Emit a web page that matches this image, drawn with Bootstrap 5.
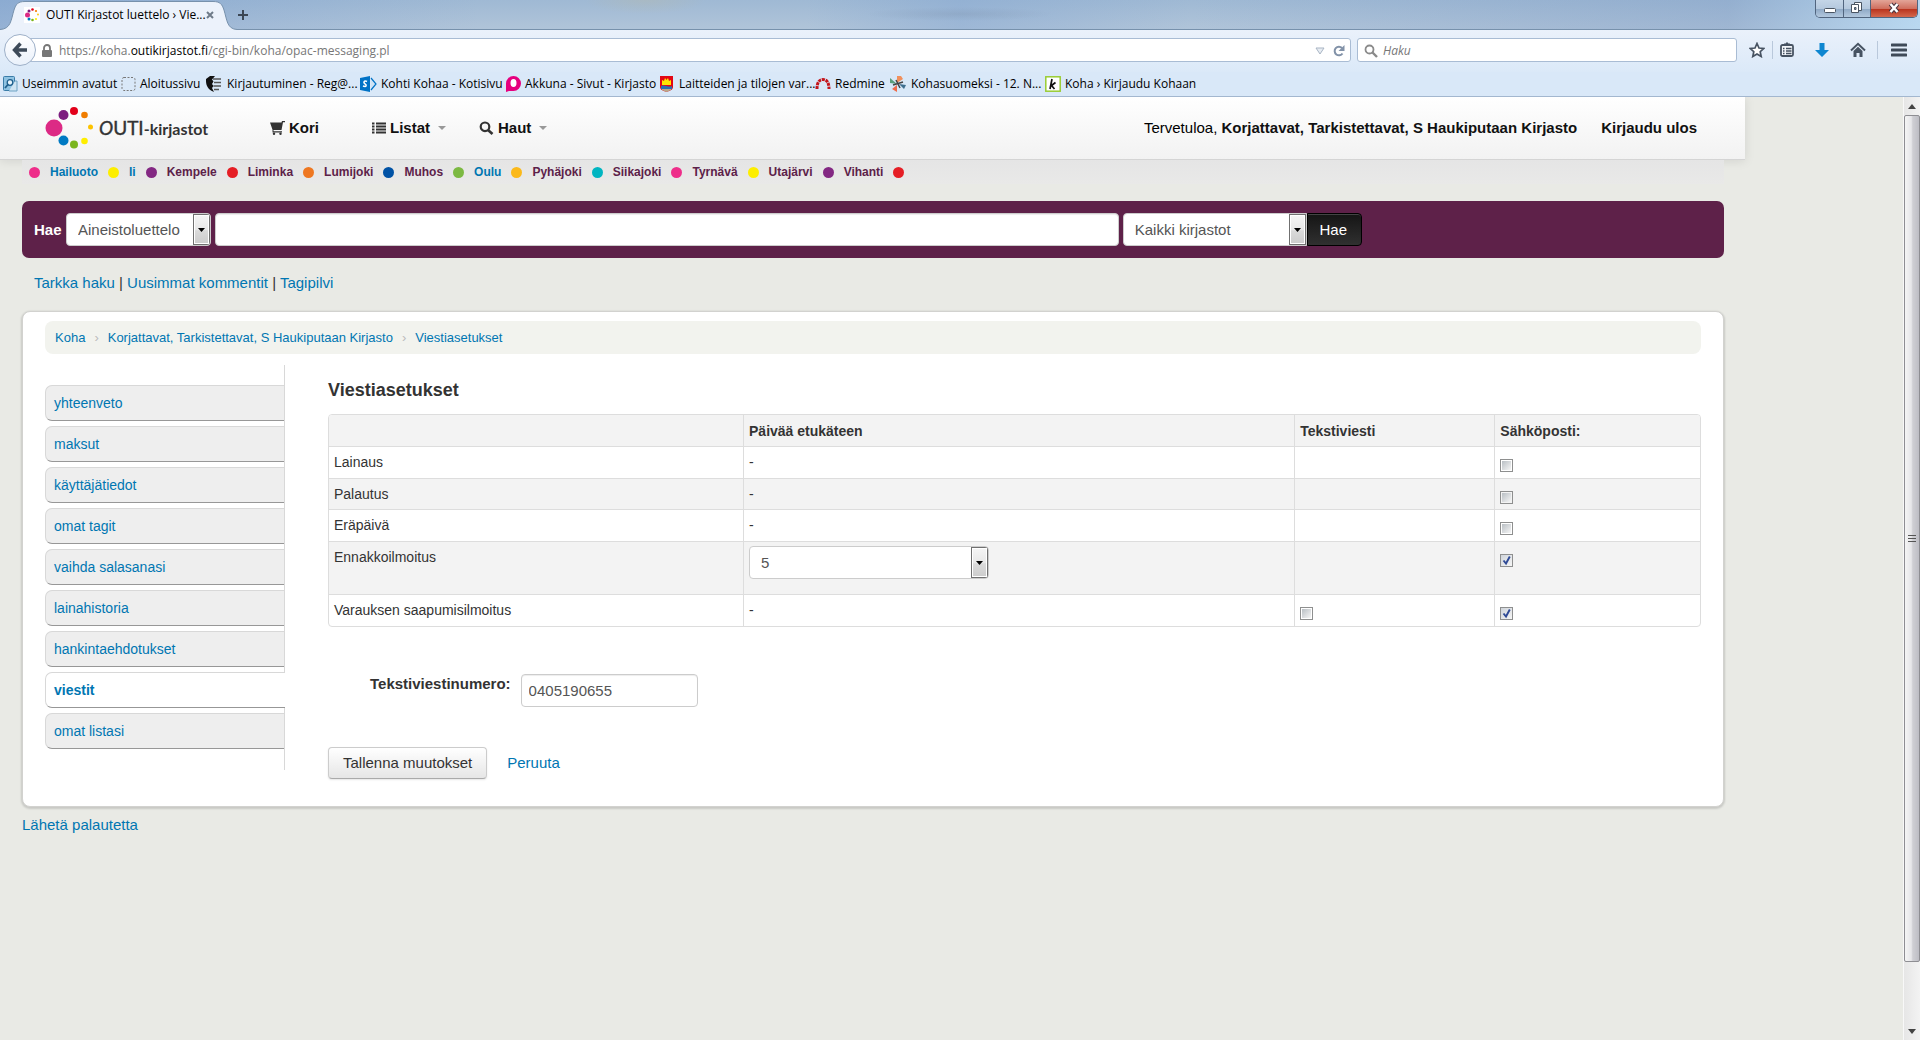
<!DOCTYPE html>
<html lang="fi">
<head>
<meta charset="utf-8">
<meta name="viewport" content="width=device-width, initial-scale=1">
<title>OUTI Kirjastot luettelo › Viestiasetukset</title>
<link href="https://cdn.jsdelivr.net/npm/bootstrap@5.3.0/dist/css/bootstrap.min.css" rel="stylesheet">
<script src="https://cdn.jsdelivr.net/npm/bootstrap@5.3.0/dist/js/bootstrap.bundle.min.js" defer></script>
<style>
body{font-family:"Liberation Sans",Arial,sans-serif;font-size:15px;line-height:20px;color:#333;background:#e9eae5}
a{color:#0076b2;text-decoration:none}
svg{display:block;flex:none}
/* browser window */
.chrome{font-family:"Open Sans","Noto Sans",sans-serif;font-size:12px;line-height:16px;color:#000}
.tabstrip{height:30px;background:radial-gradient(ellipse 95px 7px at 960px 14px,rgba(120,140,165,.25),transparent),radial-gradient(ellipse 60px 14px at 645px 0,rgba(180,185,175,.45),transparent),linear-gradient(90deg,rgba(110,150,205,.4),transparent 25%,transparent 42%,rgba(130,165,210,.4) 50%,transparent 62%,rgba(120,150,195,.3) 90%,rgba(190,225,250,.7)),linear-gradient(#9fb9d4,#b0c4d9);border-bottom:1px solid #7791ac}
.page-tab{width:237px;height:30px;padding-left:24px;margin-bottom:-1px}
.tab-shape{position:absolute;left:0;top:0;z-index:-1}
.tab-title{width:152px;margin-left:6px;white-space:nowrap}
.winctl{height:18px;width:103px;border:1px solid #51657f;border-top:0;border-radius:0 0 5px 5px;overflow:hidden;margin-right:2px}
.winctl button{border:0;padding:0;width:27px;background:linear-gradient(#c4d5e7,#b5c9de 50%,#8ea8c5 52%,#b3c8de)}
.winctl button+button{border-left:1px solid #51657f}
.winctl .w-close{background:linear-gradient(#e3a598,#d0705f 50%,#b8321c 52%,#d4684d)}
.toolbar{height:42px;padding:8px 13px 0 4px;background:linear-gradient(#eaf1fb,#dbe9f8)}
.backbtn{width:32px;height:32px;border:1px solid #9eb0c8;border-radius:50%;background:linear-gradient(#fff,#eaf1fb);z-index:1;padding:0;margin-top:-4px}
.urlbox,.findbox{height:24px;background:#fff;border:1px solid #a9bcd4;border-radius:3px}
.urlbox{margin-left:-8px;padding:1px 5px 0 12px}
.findbox{width:380px;margin-left:6px;padding:1px 6px 0}
.findbox input{border:0;outline:0;background:none;padding:0;color:#777;height:20px;margin-left:5px}
.url-text{color:#777;margin-left:6px}
.findbox input::placeholder{color:#777;font-style:italic;opacity:1}
.toolicons{margin-left:12px;height:24px}
.tool-sep{width:1px;height:18px;background:#b9c8db;margin:0 7px}
.tool-sep.wide{margin:0 13px 0 11px}
.toolicons .far{margin-left:21px}
.toolicons button,.urlbox button,.page-tab button,.plus{border:0;background:none;padding:0}
.bookmarks{height:25px;background:#d9e8f8;border-bottom:1px solid #a3b7cf;padding:1px 0 0 3px;display:grid;grid-template-columns:118px 84px 155px 146px 153px 156px 74px 156px auto;justify-content:start}
.bookmarks a{color:#000;display:flex;align-items:center;gap:4px;white-space:nowrap;line-height:22px;height:22px}
/* scrollbar */
.scroller{width:17px;background:linear-gradient(90deg,#e6e6e6,#f3f3f3);border-left:1px solid #f8f8f8}
.scroll-end{height:18px}
.thumb{flex:847 1 0;border:1px solid #8e8e93;border-radius:2px;background:linear-gradient(90deg,#f5f5f5,#e6e6e9 45%,#cfcfd4 55%,#bdbdc4)}
.track-rest{flex:60 1 0}
/* opac header */
.opac{padding-right:158px}
.topnav{height:63px;padding:0 48px 0 45px;background:linear-gradient(#fff,#f2f2f2);border-bottom:1px solid #d4d4d4;box-shadow:0 1px 10px rgba(0,0,0,.1)}
.topnav a{color:#111;font-weight:bold}
.logo{width:225px}
.logo-name{margin-left:6px;line-height:24px;white-space:nowrap;font-family:Lato,sans-serif;color:#333}
.logo-name .l0{font-style:italic}
.logo-name .l1{font-size:19px;font-weight:400;-webkit-text-stroke:.4px #333}
.logo-name .l2{font-size:16px;font-weight:bold}
.menu-listat{margin-left:53px}
.menu-haut{margin-left:33px}
.caret-down{border:4px solid transparent;border-top-color:#999;border-bottom:0;margin-left:8px}
.inner{margin-left:22px;margin-right:21px}
.cities{height:24px;background:linear-gradient(#e5e5e5,#e9e9e8);gap:10px;padding-left:7px;font-size:12px;line-height:16px;font-weight:bold;position:relative}
.cities a{color:#5c2149}
.cities a.hot{color:#0076b2}
.city-dot{width:11px;height:11px;border-radius:50%;flex:none}
.d-pink{background:#ee2d8a}.d-yellow{background:#fdee00}.d-purple{background:#832883}.d-red{background:#e51e25}.d-orange{background:#ee7721}.d-blue{background:#0052a5}.d-green{background:#7cb942}.d-amber{background:#fbb91a}.d-teal{background:#00b5c1}
/* search */
.searchbar{background:#5e2149;border-radius:7px;padding:12px;margin-top:17px;height:57px}
.searchbar label{color:#fff;font-weight:bold;width:32px}
.opac .field{height:33px;border:1px solid #ccc;border-radius:4px;background-color:#fff;color:#555;font-size:15px;line-height:20px;padding:5px 7px;box-shadow:inset 0 1px 1px rgba(0,0,0,.075)}
.opac select.field{appearance:none;padding-left:11px;box-shadow:none;background-repeat:no-repeat;background-position:right 0 center;background-image:url("data:image/svg+xml,%3Csvg xmlns='http://www.w3.org/2000/svg' width='17' height='31'%3E%3Cdefs%3E%3ClinearGradient id='g' x2='0' y2='1'%3E%3Cstop stop-color='%23f4f4f4'/%3E%3Cstop offset='.5' stop-color='%23e8e8e8'/%3E%3Cstop offset='.55' stop-color='%23dadada'/%3E%3Cstop offset='1' stop-color='%23cdcdcd'/%3E%3C/linearGradient%3E%3C/defs%3E%3Crect x='.5' y='.5' width='16' height='30' fill='%23fff' stroke='%23707070'/%3E%3Crect x='2' y='2' width='13' height='27' fill='url(%23g)'/%3E%3Cpath d='M5 14h7l-3.500 4z'/%3E%3C/svg%3E")}
.btn-hae{height:33px;width:55px;border:1px solid #000;border-radius:0 4px 4px 0;background:linear-gradient(#151515,#303030);color:#fff;box-shadow:inset 0 1px 0 rgba(255,255,255,.2);padding:0 2px 0 0;line-height:20px}
.terms{width:65.3%}
.opac select.scope{width:145px}
.opac .term{margin-left:4px;margin-right:4px;min-width:0}
.opac select.branch{width:184px;border-radius:4px 0 0 4px}
.morelinks{padding:15px 12px 0;margin-bottom:18px}
/* panel */
.panel{background:#fff;border:1px solid #d2d2cf;border-radius:8px;box-shadow:0 1px 2px 1px rgba(0,0,0,.14);padding:9px 22px 27px}
.crumbs{background:#f2f3ee;border-radius:8px;height:33px;padding:0 10px;font-size:13px}
.crumbs li+li::before{content:"›";color:#bbb;padding:0 9px}
.sidemenu{width:240px;border-right:1px solid #d8d8d8;margin-top:11px;padding:20px 0 16px}
.sidemenu a{display:block;height:36px;margin-bottom:5px;padding:7px 8px;font-size:14px;border:1px solid #d8d8d8;border-right:0;border-bottom-color:#979797;border-radius:7px 0 0 7px;background:#eee}
.sidemenu a.current{background:#fff;font-weight:bold;margin-right:-1px}
.prefs{margin-left:43px;padding-top:24px}
.prefs h3{font-size:18px;line-height:24px;font-weight:bold;margin-bottom:12px;color:#333}
.msg{border:1px solid #ddd;border-radius:4px;border-collapse:separate;border-spacing:0;font-size:14px;width:100%;table-layout:fixed;overflow:hidden}
.msg th,.msg td{padding:5px;line-height:20px;border-top:1px solid #ddd;vertical-align:top;color:#333}
.msg th{border-top:0;padding-top:6px}
.msg tbody tr:nth-child(odd) td{padding-bottom:6px}
.msg th+th,.msg td+td{border-left:1px solid #ddd}
.msg thead th,.msg tbody tr:nth-child(even) td{background:#f3f3f3}
.msg select.field{margin:-1px 0 10px;display:block;width:240px}
.tick{appearance:none;width:13px;height:13px;border:1px solid #8e8f8f;background:linear-gradient(135deg,#b9bfc4,#f6f6f6) content-box #f4f4f4;padding:1px;display:block;margin:7px 0 0}
.tick:checked{background:url("data:image/svg+xml,%3Csvg xmlns='http://www.w3.org/2000/svg' viewBox='0 0 11 11'%3E%3Cpath d='M2.500 5.500l2.500 3 3.800-7' fill='none' stroke='%232f4a96' stroke-width='1.900'/%3E%3C/svg%3E") center/11px 11px,linear-gradient(135deg,#cfd4da,#f6f6f6)}
.smsrow{padding:47px 0 40px 42px}
.smsrow label{font-weight:bold;margin-right:10px}
.smsrow .field{width:177px}
.btn-save{height:32px;border:1px solid #bbb;border-color:#ccc #ccc #aaa;border-radius:4px;background:linear-gradient(#fff,#e6e6e6);box-shadow:0 1px 2px rgba(0,0,0,.1);padding:0 14px;color:#333}
</style>
</head>
<body class="vh-100 d-flex flex-column overflow-hidden">
<header class="chrome">
  <div class="tabstrip d-flex justify-content-between">
    <div class="d-flex align-items-center">
      <div class="page-tab d-flex align-items-center position-relative z-1">
        <svg class="tab-shape" width="237" height="30" viewBox="0 0 237 30"><path d="M0 29.500C11 29 11 20 14 10 16 4 18 1.500 25 1.500H213C220 1.500 222 4 224 10 227 20 227 29 237 29.500V30H0z" fill="#ecf2fb"/><path d="M0 29.500C11 29 11 20 14 10 16 4 18 1.500 25 1.500H213C220 1.500 222 4 224 10 227 20 227 29 237 29.500" fill="none" stroke="#7791ac"/></svg>
        <svg width="16" height="16" viewBox="0 0 16 16"><rect width="16" height="16" fill="#fff"/><circle cx="3.500" cy="8" r="2.500" fill="#dc2a85"/><circle cx="5" cy="4" r="1.500" fill="#7d1d7f"/><circle cx="8.500" cy="2.500" r="1.300" fill="#e2001a"/><circle cx="12" cy="4" r="1.100" fill="#f07d00"/><circle cx="14" cy="7.500" r=".9" fill="#fdc300"/><circle cx="12" cy="12" r="1.100" fill="#fe0"/><circle cx="8.500" cy="13" r="1.300" fill="#7ab51d"/><circle cx="5" cy="12" r="1.500" fill="#007ac3"/></svg>
        <span class="tab-title">OUTI Kirjastot luettelo › Vie...</span>
        <button type="button" aria-label="Sulje välilehti" class="ms-2"><svg width="8" height="8" viewBox="0 0 8 8"><path d="M1 1l6 6M7 1l-6 6" stroke="#6f7b89" stroke-width="2"/></svg></button>
      </div>
      <button type="button" class="plus" aria-label="Uusi välilehti"><svg width="12" height="12" viewBox="0 0 12 12"><path d="M6 1v10M1 6h10" stroke="#3b4654" stroke-width="2"/></svg></button>
    </div>
    <div class="winctl d-flex">
      <button type="button" aria-label="Pienennä"><svg width="27" height="17" viewBox="0 0 27 17"><rect x="8.500" y="8.500" width="11" height="4" rx="1" fill="#fff" stroke="#4a5563"/></svg></button>
      <button type="button" aria-label="Palauta"><svg width="26" height="17" viewBox="0 0 26 17"><g fill="#fff" stroke="#4a5563"><path d="M10.500 2.500h7v8h-7z"/><path d="M7.500 4.500h7v8h-7z"/><path d="M10.500 7.500h1.500v2h-1.500z" fill="#8ea8c5"/></g></svg></button>
      <button type="button" aria-label="Sulje" class="w-close flex-fill"><svg width="46" height="17" viewBox="0 0 46 17"><path d="M19.500 4l7 8M26.500 4l-7 8" stroke="#4a3540" stroke-width="4.500"/><path d="M19.500 4l7 8M26.500 4l-7 8" stroke="#fff" stroke-width="2.500"/></svg></button>
    </div>
  </div>
  <div class="toolbar d-flex align-items-start">
    <button type="button" class="backbtn d-flex align-items-center justify-content-center" aria-label="Takaisin"><svg width="16" height="16" viewBox="0 0 16 16"><path d="M8.500 1.500L2.500 8l6 6.500M3 8h12" fill="none" stroke="#3d4a59" stroke-width="3.400"/></svg></button>
    <div class="urlbox d-flex align-items-center flex-fill">
      <svg width="12" height="14" viewBox="0 0 12 14"><rect x="1" y="6" width="10" height="7" rx="1" fill="#777"/><path d="M3 6V4a3 3 0 016 0v2" fill="none" stroke="#777" stroke-width="1.800"/></svg>
      <span class="url-text flex-fill">https://koha.<span class="text-black">outikirjastot.fi</span>/cgi-bin/koha/opac-messaging.pl</span>
      <svg width="10" height="8" viewBox="0 0 10 8"><path d="M1 1h8L5 7z" fill="#e8edf3" stroke="#a9b5c4"/></svg>
      <button type="button" aria-label="Päivitä" class="ms-2"><svg width="12" height="14" viewBox="0 0 12 14"><path d="M9.500 9.500A4.300 4.300 0 119 4" fill="none" stroke="#8292a8" stroke-width="2"/><path d="M11.500 1v6h-6z" fill="#8292a8"/></svg></button>
    </div>
    <div class="findbox d-flex align-items-center">
      <svg width="14" height="14" viewBox="0 0 14 14"><circle cx="5.500" cy="5.500" r="4" fill="none" stroke="#8a8a8a" stroke-width="1.800"/><path d="M8.500 8.500l4.500 4.500" stroke="#8a8a8a" stroke-width="2.400"/></svg>
      <input class="flex-fill" type="text" placeholder="Haku" aria-label="Haku">
    </div>
    <div class="toolicons d-flex align-items-center">
      <button type="button" aria-label="Lisää kirjanmerkki"><svg width="16" height="16" viewBox="0 0 16 16"><path d="M8 1.500l2 4.500 4.700.5-3.500 3.200 1 4.800L8 12l-4.200 2.500 1-4.800L1.300 6.500 6 6z" fill="#fff" stroke="#475362" stroke-width="1.700"/></svg></button>
      <span class="tool-sep"></span>
      <button type="button" aria-label="Kirjanmerkit"><svg width="14" height="16" viewBox="0 0 14 16"><rect x="1" y="3" width="12" height="11" rx="1.500" fill="#f4f7fb" stroke="#475362" stroke-width="1.800"/><path d="M4 3V1.500h1.500L7 0l1.500 1.500H10V4H4z" fill="#475362"/><path d="M3 6.500h1.500M6 6.500h5.500M3 9h1.500M6 9h5.500M3 11.500h1.500M6 11.500h5.500" stroke="#475362" stroke-width="1.300"/></svg></button>
      <button type="button" aria-label="Lataukset" class="far"><svg width="14" height="16" viewBox="0 0 14 16"><path d="M4.500 1h5v7H14l-7 7-7-7h4.500z" fill="#0e86d0"/></svg></button>
      <button type="button" aria-label="Koti" class="far"><svg width="16" height="16" viewBox="0 0 16 16"><path d="M1 8.500L8 1.800l7 6.700" fill="none" stroke="#475362" stroke-width="2"/><path d="M3.500 9L8 4.800 12.500 9v6H9.500v-4h-3v4h-3z" fill="#475362"/></svg></button>
      <span class="tool-sep wide"></span>
      <button type="button" aria-label="Valikko"><svg width="16" height="14" viewBox="0 0 16 14"><path d="M1 2h14M1 7h14M1 12h14" stroke="#3f4a58" stroke-width="3" stroke-linecap="round"/></svg></button>
    </div>
  </div>
  <nav class="bookmarks" aria-label="Kirjanmerkit">
    <a href="#"><svg width="15" height="16" viewBox="0 0 15 16"><rect x=".5" y=".5" width="11" height="14" rx="1" fill="#8fc3e2" stroke="#3b7da8"/><path d="M12 5h2v10H6" fill="#cfe4f2" stroke="#6fa3c4"/><circle cx="7" cy="6.500" r="2.800" fill="#e6f4fc" stroke="#1f5f8c" stroke-width="1.300"/><path d="M5 8.500l-3 3.500" stroke="#1f5f8c" stroke-width="1.800"/></svg>Useimmin avatut</a>
    <a href="#"><svg width="15" height="16" viewBox="0 0 15 16"><rect x="1" y="1.500" width="13" height="13" rx="2" fill="none" stroke="#777" stroke-dasharray="2 1.500"/></svg>Aloitussivu</a>
    <a href="#"><svg width="18" height="16" viewBox="0 0 18 16"><path d="M1 3l4-3h5L7 3.500 8.500 5.500 7 8l1.500 2L7 12l2 4C3 14 1 9 1 5z" fill="#111"/><path d="M8 3h8M9 6.500h7M8.500 10h7.500M9 13.500h5" stroke="#555" stroke-width="1.300"/></svg>Kirjautuminen - Reg@...</a>
    <a href="#"><svg width="17" height="16" viewBox="0 0 17 16"><path d="M11 2l5 6-5 6" fill="#cfe3f5" stroke="#0072c6" stroke-width="1.200"/><path d="M0 2l10-2v16L0 14z" fill="#0072c6"/><path d="M7 5.500C4 4 3 6.500 5 7.800s1.500 3.500-2 2.200" fill="none" stroke="#fff" stroke-width="1.600"/></svg>Kohti Kohaa - Kotisivu</a>
    <a href="#"><svg width="15" height="16" viewBox="0 0 15 16"><path d="M0 16V7.500A7.500 7.500 0 117.500 15H3z" fill="#e6007e"/><ellipse cx="7.500" cy="7" rx="3" ry="4" fill="#fff"/></svg>Akkuna - Sivut - Kirjasto</a>
    <a href="#"><svg width="16" height="16" viewBox="0 0 16 16"><path d="M1 0h13v11c0 3-4 4-6.500 5C5 15 1 14 1 11z" fill="#e30613"/><path d="M3 9V4l2 1 1-3 1.500 2L9 2l1 3 2-1v5z" fill="#ffe500"/><path d="M2 10c3-2 8 2 11 0v3H2z" fill="#2a6fb0"/><path d="M3 13h9v1l-4.500 2L3 14z" fill="#b9a98c"/></svg>Laitteiden ja tilojen var...</a>
    <a href="#"><svg width="16" height="16" viewBox="0 0 16 16"><path d="M2 13C2 7 4 3.500 8 3.500S14 7 14 13" fill="none" stroke="#c4161c" stroke-width="3" stroke-dasharray="3 .8"/></svg>Redmine</a>
    <a href="#"><svg width="18" height="16" viewBox="0 0 18 16"><path d="M8 7V0h4l2 3z" fill="#f0905c"/><path d="M8 8L1 2v5z" fill="#5a9e7c"/><path d="M10 8l7 1-2 4z" fill="#3f6f8f"/><path d="M8 9l-5 4 5 3z" fill="#ef6b4a"/><path d="M4 9L14 6M7 4l4 8" stroke="#444" stroke-width="1.500"/></svg>Kohasuomeksi - 12. N...</a>
    <a href="#"><svg width="16" height="16" viewBox="0 0 16 16"><rect x=".8" y=".8" width="14.400" height="14.400" fill="#fff" stroke="#9c3" stroke-width="1.500"/><path d="M7 3L5 13M10.500 6.500L6.500 9.500l3 3.500" fill="none" stroke="#111" stroke-width="1.700"/></svg>Koha › Kirjaudu Kohaan</a>
  </nav>
</header>
<div class="d-flex flex-fill overflow-hidden">
<div class="opac flex-fill">
  <nav class="topnav d-flex align-items-center">
    <a class="logo d-flex align-items-center" href="#">
      <svg width="48" height="44" viewBox="45 106 48 44"><circle cx="54" cy="128" r="8.500" fill="#dc2a85"/><circle cx="63.500" cy="115" r="5" fill="#7d1d7f"/><circle cx="74" cy="111" r="4" fill="#e2001a"/><circle cx="84.500" cy="115" r="3.300" fill="#f07d00"/><circle cx="90.500" cy="127" r="2.500" fill="#fdc300"/><circle cx="84.500" cy="141" r="3.300" fill="#fe0"/><circle cx="74" cy="144.500" r="4" fill="#7ab51d"/><circle cx="63.500" cy="140.500" r="5" fill="#007ac3"/></svg>
      <span class="logo-name"><span class="l1"><span class="l0">O</span>UTI</span><span class="l2">-kirjastot</span></span>
    </a>
    <a class="d-flex align-items-center" href="#"><svg class="me-1" width="15" height="14" viewBox="0 0 15 14"><path d="M0 1.500h11.500l.5-1.500H15v1.200h-2L11.500 9H3.500v1.200H12v1.300H2.500V8.800z" fill="#333"/><circle cx="4" cy="12.700" r="1.200" fill="#333"/><circle cx="10.500" cy="12.700" r="1.200" fill="#333"/></svg>Kori</a>
    <a class="menu-listat d-flex align-items-center" href="#"><svg class="me-1" width="14" height="12" viewBox="0 0 14 12"><path d="M0 1.500h2.500M0 4.500h2.500M0 7.500h2.500M0 10.500h2.500M4 1.500h10M4 4.500h10M4 7.500h10M4 10.500h10" stroke="#333" stroke-width="2"/></svg>Listat<span class="caret-down"></span></a>
    <a class="menu-haut d-flex align-items-center" href="#"><svg class="me-1" width="15" height="14" viewBox="0 0 15 14"><circle cx="6" cy="5.800" r="4.300" fill="none" stroke="#333" stroke-width="2.200"/><path d="M9 9l4.500 4" stroke="#333" stroke-width="2.600"/></svg>Haut<span class="caret-down"></span></a>
    <span class="ms-auto text-black">Tervetuloa, <a href="#">Korjattavat, Tarkistettavat, S Haukiputaan Kirjasto</a></span>
    <a class="ms-4" href="#">Kirjaudu ulos</a>
  </nav>
  <div class="inner">
    <nav class="cities d-flex align-items-center" aria-label="Kunnat">
      <span class="city-dot d-pink"></span><a class="hot" href="#">Hailuoto</a>
      <span class="city-dot d-yellow"></span><a class="hot" href="#">Ii</a>
      <span class="city-dot d-purple"></span><a href="#">Kempele</a>
      <span class="city-dot d-red"></span><a href="#">Liminka</a>
      <span class="city-dot d-orange"></span><a href="#">Lumijoki</a>
      <span class="city-dot d-blue"></span><a href="#">Muhos</a>
      <span class="city-dot d-green"></span><a class="hot" href="#">Oulu</a>
      <span class="city-dot d-amber"></span><a href="#">Pyhäjoki</a>
      <span class="city-dot d-teal"></span><a href="#">Siikajoki</a>
      <span class="city-dot d-pink"></span><a href="#">Tyrnävä</a>
      <span class="city-dot d-yellow"></span><a href="#">Utajärvi</a>
      <span class="city-dot d-purple"></span><a href="#">Vihanti</a>
      <span class="city-dot d-red"></span>
    </nav>
    <form class="searchbar d-flex align-items-center">
      <label for="scope">Hae</label>
      <select id="scope" class="field scope"><option>Aineistoluettelo</option></select>
      <div class="terms d-flex">
        <input class="field term flex-fill" type="text" aria-label="Hakusana">
        <select class="field branch" aria-label="Kirjasto"><option>Kaikki kirjastot</option></select>
      </div>
      <button type="button" class="btn-hae flex-shrink-0">Hae</button>
    </form>
    <div class="morelinks"><a href="#">Tarkka haku</a> | <a href="#">Uusimmat kommentit</a> | <a href="#">Tagipilvi</a></div>
    <main class="panel">
      <ol class="crumbs list-unstyled d-flex align-items-center mb-0">
        <li><a href="#">Koha</a></li><li><a href="#">Korjattavat, Tarkistettavat, S Haukiputaan Kirjasto</a></li><li><a href="#">Viestiasetukset</a></li>
      </ol>
      <div class="d-flex align-items-start">
        <nav class="sidemenu flex-shrink-0" aria-label="Omat tiedot">
          <a href="#">yhteenveto</a><a href="#">maksut</a><a href="#">käyttäjätiedot</a><a href="#">omat tagit</a><a href="#">vaihda salasanasi</a><a href="#">lainahistoria</a><a href="#">hankintaehdotukset</a><a class="current" href="#">viestit</a><a href="#">omat listasi</a>
        </nav>
        <form class="prefs flex-fill">
          <h3>Viestiasetukset</h3>
          <table class="msg">
            <colgroup><col style="width:30.2%"><col style="width:40.2%"><col style="width:14.6%"><col></colgroup>
            <thead><tr><th aria-label="Viesti"></th><th>Päivää etukäteen</th><th>Tekstiviesti</th><th>Sähköposti:</th></tr></thead>
            <tbody>
              <tr><td>Lainaus</td><td>-</td><td></td><td><input class="tick" type="checkbox" aria-label="Lainaus, sähköposti"></td></tr>
              <tr><td>Palautus</td><td>-</td><td></td><td><input class="tick" type="checkbox" aria-label="Palautus, sähköposti"></td></tr>
              <tr><td>Eräpäivä</td><td>-</td><td></td><td><input class="tick" type="checkbox" aria-label="Eräpäivä, sähköposti"></td></tr>
              <tr><td>Ennakkoilmoitus</td><td><select class="field" aria-label="Päivää etukäteen"><option>5</option></select></td><td></td><td><input class="tick" type="checkbox" checked aria-label="Ennakkoilmoitus, sähköposti"></td></tr>
              <tr><td>Varauksen saapumisilmoitus</td><td>-</td><td><input class="tick" type="checkbox" aria-label="Varauksen saapumisilmoitus, tekstiviesti"></td><td><input class="tick" type="checkbox" checked aria-label="Varauksen saapumisilmoitus, sähköposti"></td></tr>
            </tbody>
          </table>
          <div class="smsrow d-flex align-items-start"><label for="sms">Tekstiviestinumero:</label><input id="sms" class="field" type="text" value="0405190655"></div>
          <div class="d-flex align-items-center"><button type="button" class="btn-save">Tallenna muutokset</button><a class="ms-3 ps-1" href="#">Peruuta</a></div>
        </form>
      </div>
    </main>
    <div class="pt-2"><a href="#">Lähetä palautetta</a></div>
  </div>
</div>
<div class="scroller d-flex flex-column flex-shrink-0" aria-hidden="true">
  <div class="scroll-end d-flex align-items-center justify-content-center"><svg width="8" height="5" viewBox="0 0 8 5"><path d="M4 0l4 5H0z" fill="#444"/></svg></div>
  <div class="thumb d-flex align-items-center justify-content-center"><svg width="8" height="9" viewBox="0 0 8 9"><path d="M0 1.500h8M0 4.500h8M0 7.500h8" stroke="#555"/></svg></div>
  <div class="track-rest"></div>
  <div class="scroll-end d-flex align-items-center justify-content-center"><svg width="8" height="5" viewBox="0 0 8 5"><path d="M4 5l4-5H0z" fill="#444"/></svg></div>
</div>
</div>
</body>
</html>
